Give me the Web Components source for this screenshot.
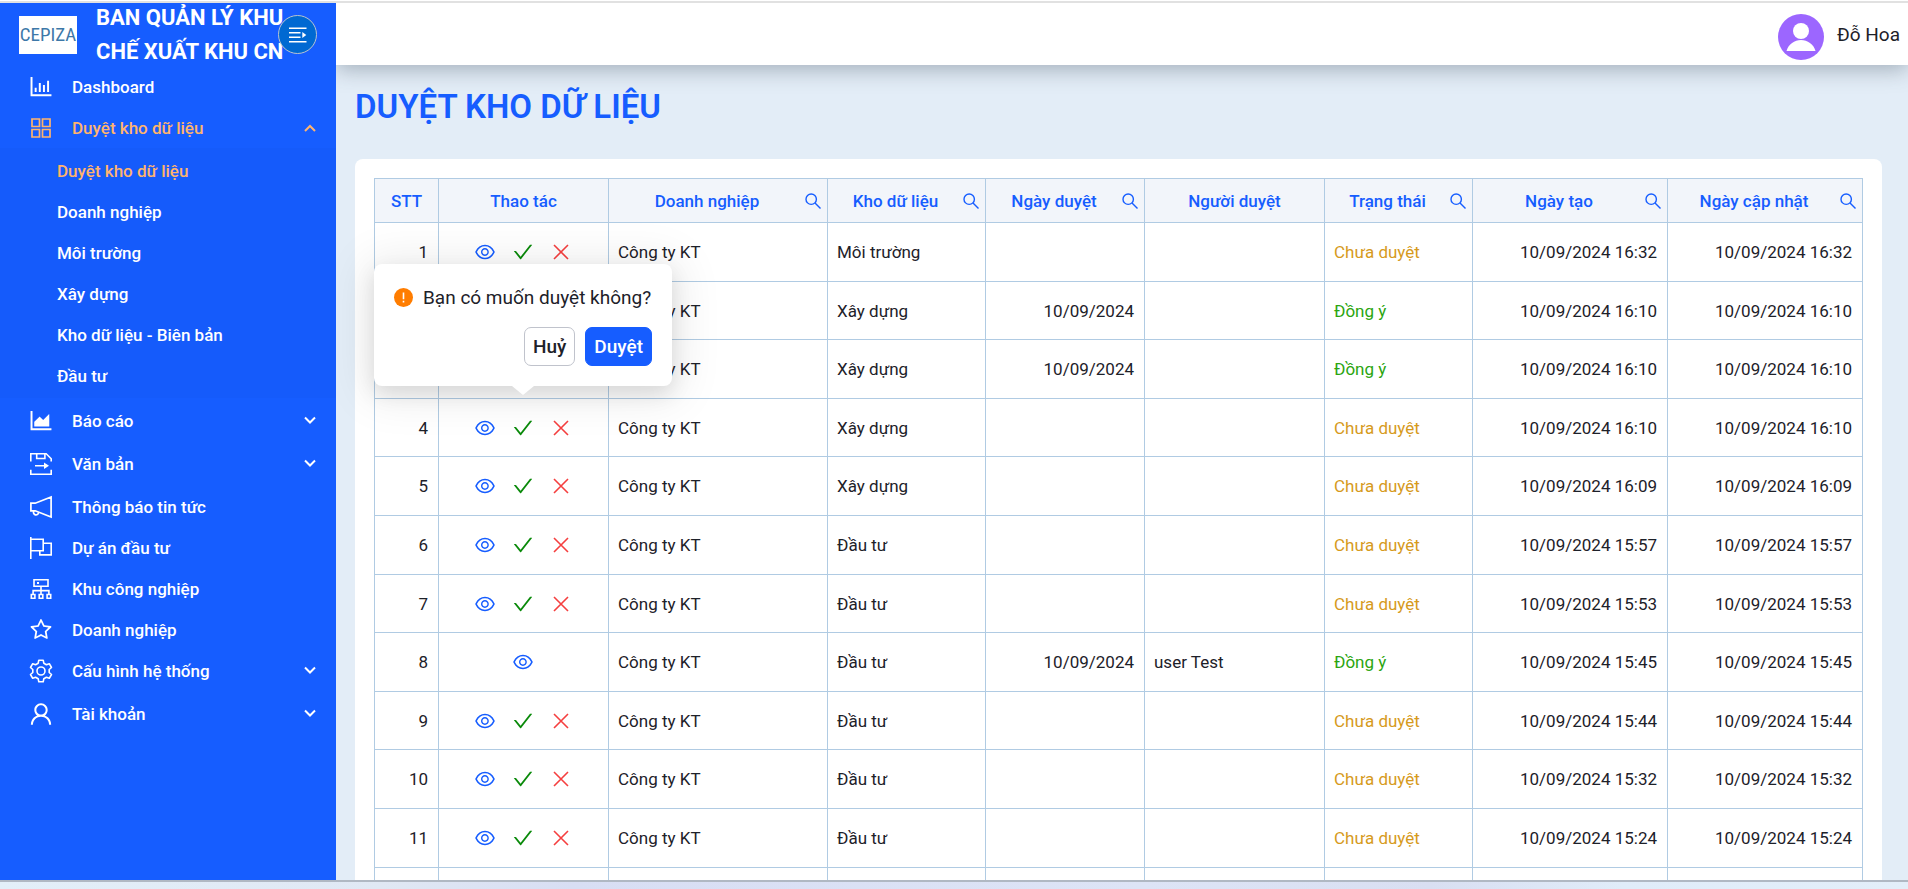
<!DOCTYPE html>
<html lang="vi">
  <head>
    <meta charset="utf-8" />
    <title>Duyệt kho dữ liệu</title>
    <meta name="viewport" content="width=device-width, initial-scale=1" />

    <style>
      body {
        --blue: #165dff;
        --orange: #ffb46e;
        --line: #b0cbe3;
        --page: #e3edf7;
        --text: #1d2129;
        margin: 0;
        height: 100vh;
        overflow: hidden;
        font-family: Roboto, 'Noto Sans', sans-serif;
        font-size: 17px;
        color: var(--text);
      }
    </style>

    <template id="app-shell">
      <style>
        :host {
          display: flex;
          flex-direction: column;
          height: 100%;
          box-sizing: border-box;
          border-top: 1px solid #fff;
        }
        .body {
          flex: 1;
          min-height: 0;
          display: flex;
          border-top: 2px solid #e1e1e1;
          border-bottom: 2px solid #b0b8c3;
        }
        .right {
          flex: 1;
          min-width: 0;
          display: flex;
          flex-direction: column;
          background: var(--page);
        }
        main {
          flex: 1;
          min-height: 0;
          overflow: hidden;
          padding: 20px 26px 0 19px;
        }
        .strip {
          height: 7px;
          background: linear-gradient(90deg, #e3eff9, #e0e8f4 20%, #d8def4 30%, #dde4f6 60%, #d9dff2 75%, #e0ecf9 85%, #e3eef9);
        }
      </style>
      <div class="body">
        <slot name="side"></slot>
        <div class="right">
          <slot name="top"></slot>
          <main><slot></slot></main>
        </div>
      </div>
      <div class="strip"></div>
    </template>

    <template id="side-bar">
      <style>
        :host {
          display: block;
          width: 336px;
          flex: none;
          background: var(--blue);
          color: #fff;
          overflow: hidden;
        }
        header {
          display: flex;
          align-items: center;
          height: 63px;
          padding: 0 19px;
        }
        .logo {
          flex: none;
          width: 58px;
          height: 38px;
          margin-right: 19px;
          background: #fff;
          color: #3d78a8;
          font: 19px/38px 'Liberation Sans Narrow', 'Roboto Condensed', Roboto, sans-serif;
          text-align: center;
        }
        h2 {
          flex: 1;
          min-width: 0;
          margin: 0;
          font-size: 22px;
          line-height: 34px;
          font-weight: 700;
          white-space: nowrap;
        }
        button {
          flex: none;
          display: grid;
          place-items: center;
          width: 39px;
          height: 39px;
          padding: 0;
          border: 1px solid #b9c4cf;
          border-radius: 50%;
          background: #0069d2;
          color: #fff;
          z-index: 1;
        }
      </style>
      <header>
        <div class="logo">CEPIZA</div>
        <h2><slot name="title"></slot></h2>
        <button aria-label="Thu gọn"><app-icon name="fold" size="18"></app-icon></button>
      </header>
      <nav><slot></slot></nav>
    </template>

    <template id="menu-item">
      <style>
        :host {
          display: block;
          font-weight: 500;
        }
        a {
          display: flex;
          align-items: center;
          height: 41px;
          padding-left: 30px;
          color: inherit;
          text-decoration: none;
        }
        app-icon {
          margin-right: 20px;
        }
        :host([sub]) a {
          padding-left: 57px;
        }
        :host([sub]) app-icon {
          display: none;
        }
        :host([active]) {
          color: var(--orange);
        }
      </style>
      <a href="#"><app-icon size="22"></app-icon><slot></slot></a>
    </template>

    <template id="menu-group">
      <style>
        :host {
          display: block;
          margin-bottom: 2px;
        }
        button {
          display: flex;
          align-items: center;
          width: 100%;
          height: 41px;
          padding: 0 20px 0 30px;
          border: 0;
          background: none;
          color: #fff;
          font: inherit;
          font-weight: 500;
          cursor: pointer;
        }
        span {
          flex: 1;
          margin-left: 20px;
          text-align: left;
        }
        .items {
          display: none;
          padding: 2px 0;
          background: #155bfb;
        }
        :host([open]) button {
          color: var(--orange);
        }
        :host([open]) .items {
          display: block;
        }
      </style>
      <button><app-icon class="icon" size="22"></app-icon><span></span><app-icon class="arrow" size="12"></app-icon></button>
      <div class="items"><slot></slot></div>
    </template>

    <template id="top-bar">
      <style>
        :host {
          display: flex;
          flex: none;
          align-items: center;
          justify-content: flex-end;
          gap: 13px;
          height: 62px;
          padding-right: 8px;
          background: #fff;
          box-shadow: 0 4px 22px rgba(60, 75, 90, 0.4);
          clip-path: inset(0 0 -40px 0);
          font-size: 19px;
        }
        svg {
          width: 46px;
          height: 46px;
          margin-top: 6px;
        }
      </style>
      <svg viewBox="0 0 46 46">
        <circle cx="23" cy="23" r="23" fill="#9c66ff" />
        <circle cx="23" cy="17" r="8" fill="#fff" />
        <path d="M8.500 37c2-7 8-11 14.500-11s12.500 4 14.500 11z" fill="#fff" />
      </svg>
      <slot></slot>
    </template>

    <template id="page-card">
      <style>
        :host {
          display: block;
        }
        h1 {
          margin: 0 0 30px;
          font-size: 33px;
          line-height: 44px;
          font-weight: 600;
          color: var(--blue);
        }
        .card {
          padding: 19px;
          border-radius: 8px;
          background: #fff;
        }
      </style>
      <h1><slot name="title"></slot></h1>
      <div class="card"><slot></slot></div>
    </template>

    <template id="data-table">
      <style>
        :host {
          display: block;
        }
        table {
          width: 100%;
          table-layout: fixed;
          border-collapse: collapse;
        }
        th,
        td {
          border: 1px solid var(--line);
          padding: 0 10px 0 9px;
          white-space: nowrap;
        }
        th {
          height: 43px;
          padding: 0;
          background: #f2f5fa;
          color: var(--blue);
          font-weight: 500;
        }
        th div {
          display: flex;
          align-items: center;
        }
        th span {
          flex: 1;
        }
        th button {
          margin-right: 6px;
        }
        td {
          height: 58px;
        }
        tr:nth-child(5n + 2) td,
        tr:nth-child(5n + 4) td {
          height: 57px;
        }
        .num {
          text-align: right;
        }
        .actions {
          display: flex;
          justify-content: center;
          gap: 18px;
        }
        .anchor {
          position: relative;
          display: block;
        }
        button {
          display: block;
          padding: 0;
          border: 0;
          background: none;
          color: var(--blue);
          cursor: pointer;
        }
        .ok {
          color: #0a8a0a;
        }
        .no {
          color: #f53f3f;
        }
        .wait {
          color: #d69a1c;
        }
        .done {
          color: #2ba50f;
        }
      </style>
      <table>
        <colgroup></colgroup>
        <thead><tr></tr></thead>
        <tbody></tbody>
      </table>
    </template>

    <template id="confirm-pop">
      <style>
        :host {
          position: absolute;
          bottom: calc(100% + 32px);
          left: 50%;
          z-index: 2;
          transform: translateX(-50%);
          width: 258px;
          padding: 20px;
          border-radius: 8px;
          background: #fff;
          box-shadow: 0 8px 20px rgba(0, 0, 0, 0.1), 0 4px 44px 10px rgba(0, 0, 0, 0.08);
          font-size: 19px;
          white-space: nowrap;
        }
        :host::after {
          content: '';
          position: absolute;
          top: 100%;
          left: 50%;
          margin-left: -11px;
          border: 11px solid transparent;
          border-top: 9px solid #fff;
          border-bottom: 0;
        }
        p {
          display: flex;
          align-items: center;
          gap: 10px;
          margin: 0 0 15px;
          line-height: 28px;
        }
        p app-icon {
          color: #ff7d00;
        }
        div {
          display: flex;
          justify-content: flex-end;
          gap: 10px;
        }
        button {
          height: 39px;
          padding: 0 8px;
          border: 1px solid #c0c3cc;
          border-radius: 7px;
          background: #fff;
          color: inherit;
          font: inherit;
          font-weight: 500;
        }
        .primary {
          border-color: var(--blue);
          background: var(--blue);
          color: #fff;
        }
      </style>
      <p><app-icon name="warn" size="19"></app-icon><slot></slot></p>
      <div><button>Huỷ</button><button class="primary">Duyệt</button></div>
    </template>
  </head>

  <body>
    <app-shell>
      <side-bar slot="side">
        <span slot="title">BAN QUẢN LÝ KHU<br />CHẾ XUẤT KHU CN</span>
        <menu-item icon="bars">Dashboard</menu-item>
        <menu-group icon="apps" label="Duyệt kho dữ liệu" open>
          <menu-item sub active>Duyệt kho dữ liệu</menu-item>
          <menu-item sub>Doanh nghiệp</menu-item>
          <menu-item sub>Môi trường</menu-item>
          <menu-item sub>Xây dựng</menu-item>
          <menu-item sub>Kho dữ liệu - Biên bản</menu-item>
          <menu-item sub>Đầu tư</menu-item>
        </menu-group>
        <menu-group icon="area" label="Báo cáo"></menu-group>
        <menu-group icon="save" label="Văn bản"></menu-group>
        <menu-item icon="horn">Thông báo tin tức</menu-item>
        <menu-item icon="flag">Dự án đầu tư</menu-item>
        <menu-item icon="cluster">Khu công nghiệp</menu-item>
        <menu-item icon="star">Doanh nghiệp</menu-item>
        <menu-group icon="gear" label="Cấu hình hệ thống"></menu-group>
        <menu-group icon="user" label="Tài khoản"></menu-group>
      </side-bar>
      <top-bar slot="top">Đỗ Hoa</top-bar>
      <page-card>
        <span slot="title">DUYỆT KHO DỮ LIỆU</span>
        <data-table></data-table>
      </page-card>
    </app-shell>

    <script>
      // [viewBox, markup]
      const ANT = '64 64 896 896';
      const AXES =
        'M888 792H200V168c0-4.400-3.600-8-8-8h-56c-4.400 0-8 3.600-8 8v688c0 4.400 3.600 8 8 8h752c4.400 0 8-3.600 8-8v-56c0-4.400-3.600-8-8-8z';
      const line = (w, body) => `<g fill="none" stroke="currentColor" stroke-width="${w}">${body}</g>`;
      const ICONS = {
        bars: ['108 120 808 808', `<path d="${AXES}M280 552h72v160h-72zM432 376h72v336h-72zM584 454h72v258h-72zM736 296h72v416h-72z"/>`],
        area: [
          '108 120 808 808',
          `<path d="${AXES}M272 728h536c4.400 0 8-3.600 8-8V284c0-7.200-8.700-10.700-13.700-5.700L592 488.600l-125.400-124a8 8 0 00-11.300 0l-189 189.600a7.900 7.900 0 00-2.300 5.600V720c0 4.400 3.600 8 8 8z"/>`,
        ],
        apps: ['0 0 22 22', line(1.7, '<path d="M2 2h7.500v7.500H2zM12.500 2H20v7.500h-7.500zM2 12.500h7.500V20H2zM12.500 12.500H20V20h-7.500z"/>')],
        save: [
          '0 0 22 22',
          line(1.6, '<path d="M.8 8.500V.8h15.400l5 5v2.700M6.700.8v4.700h8.200V.8M.8 16.800v4.400h20.400v-4.400M5 12.700h10"/>') +
            '<path d="M14 9.500l5 3.200-5 3.200z"/>',
        ],
        horn: [
          '0 0 22 22',
          line(1.7, '<path d="M.9 7.200h4.300L21.100.9v20.200L5.200 14.800H.9zM3.800 15.200a2.500 2.500 0 104.700 1.200"/>'),
        ],
        flag: ['0 0 22 22', line(1.6, '<path d="M.8 0v22M.8 2.300h12.400v11.400H.8M13.200 6.300h8v11.600H9.800v-4.200"/>')],
        cluster: [
          '0 0 22 22',
          line(1.6, '<path d="M4 1.800h14v6.400H4zM11 8.200V16M3.100 16v-3.400h15.800V16M1.300 16.500h3.600v3.700H1.300zM9.200 16.500h3.600v3.700H9.200zM17.100 16.500h3.600v3.700h-3.600z"/>') +
            '<path d="M7 4h2v2H7z"/>',
        ],
        star: [
          ANT,
          '<path d="M908.100 353.100l-253.900-36.900L540.700 86.100c-3.100-6.300-8.200-11.400-14.500-14.500-15.800-7.800-35-1.300-42.900 14.500L369.800 316.200l-253.900 36.900c-7 1-13.400 4.300-18.300 9.300a32 32 0 00.6 45.300l183.700 179.100-43.400 252.900a32 32 0 0046.400 33.700L512 754l227.100 119.400c6.200 3.300 13.400 4.400 20.300 3.200 17.400-3 29.100-19.500 26.100-36.900l-43.400-252.900 183.700-179.100c5-4.900 8.300-11.300 9.300-18.300 2.700-17.500-9.500-33.700-27-36.300zM664.800 561.600l36.100 210.300L512 672.700 323.100 772l36.100-210.300-152.800-149L417.600 382 512 190.700 606.400 382l211.200 30.700-152.800 148.900z"/>',
        ],
        gear: [
          '0 0 22 22',
          line(
            1.6,
            '<path stroke-linejoin="round" d="M8.800.2h4.400l.6 3 2.600 1.500 2.900-1 2.200 3.800-2.300 2v3l2.300 2-2.200 3.800-2.900-1-2.600 1.500-.6 3H8.800l-.6-3-2.600-1.500-2.900 1L.5 14.500l2.300-2v-3l-2.300-2 2.200-3.800 2.900 1 2.600-1.500z"/><circle cx="11" cy="11" r="4"/>'
          ),
        ],
        user: [
          '104 104 816 816',
          '<path d="M858.500 763.600a374 374 0 00-80.600-119.500 375.600 375.600 0 00-119.500-80.600c-.4-.2-.8-.3-1.200-.5C719.500 518 760 444.700 760 362c0-137-111-248-248-248S264 225 264 362c0 82.700 40.500 156 102.800 201.100-.4.2-.8.3-1.200.5-44.800 18.900-85 46-119.500 80.600a375.600 375.600 0 00-80.600 119.500A371.700 371.700 0 00136 901.800a8 8 0 008 8.200h60c4.400 0 7.900-3.500 8-7.800 2-77.200 33-149.500 87.800-204.300 56.700-56.700 132-87.900 212.200-87.900s155.500 31.200 212.200 87.900C779 752.700 810 825 812 902.200c.1 4.400 3.600 7.800 8 7.800h60a8 8 0 008-8.200c-1-47.800-10.900-94.300-29.500-138.200zM512 534c-45.900 0-89.100-17.900-121.600-50.400S340 407.900 340 362c0-45.900 17.900-89.100 50.400-121.600S466.100 190 512 190s89.100 17.900 121.600 50.400S684 316.100 684 362c0 45.900-17.900 89.100-50.400 121.600S557.900 534 512 534z"/>',
        ],
        eye: [
          ANT,
          '<path d="M942.200 486.200C847.400 286.500 704.100 186 512 186c-192.200 0-335.400 100.500-430.200 300.300a60.300 60.300 0 000 51.500C176.600 737.500 319.900 838 512 838c192.200 0 335.400-100.500 430.200-300.300 7.700-16.200 7.700-35 0-51.500zM512 766c-161.300 0-279.400-81.800-362.700-254C232.600 339.800 350.700 258 512 258c161.300 0 279.400 81.800 362.700 254C791.500 684.200 673.400 766 512 766zm-4-430c-97.200 0-176 78.800-176 176s78.800 176 176 176 176-78.800 176-176-78.800-176-176-176zm0 288c-61.900 0-112-50.100-112-112s50.100-112 112-112 112 50.100 112 112-50.100 112-112 112z"/>',
        ],
        check: [
          ANT,
          '<path d="M912 190h-69.900c-9.800 0-19.100 4.500-25.100 12.200L404.700 724.500 207 474a32 32 0 00-25.100-12.200H112c-6.700 0-10.400 7.700-6.300 12.900l273.900 347c12.800 16.200 37.400 16.200 50.300 0l488.400-618.900c4.100-5.100.4-12.800-6.300-12.800z"/>',
        ],
        close: ['0 0 20 20', line(1.6, '<path d="M3 3l14 14M17 3L3 17"/>')],
        search: ['0 0 16 16', line(1.4, '<circle cx="6.200" cy="6.200" r="5.200"/><path d="M10 10l5.500 5.500"/>')],
        fold: ['0 0 18 18', line(1.6, '<path d="M0 2.300h17.500M0 6.800h11.500M0 11.300h11.500M0 15.800h17.500"/>') + '<path d="M13.300 6l4 3-4 3z"/>'],
        down: ['0 0 12 12', line(2, '<path d="M1 2.500l5 5 5-5"/>')],
        up: ['0 0 12 12', line(2, '<path d="M1 9l5-5 5 5"/>')],
        warn: ['0 0 19 19', '<circle cx="9.500" cy="9.500" r="9.500"/><path d="M8.700 4.500h1.600v6.800H8.700zM8.700 12.700h1.600v1.700H8.700z" fill="#fff"/>'],
      };

      const stamp = (el, id) => {
        const root = el.attachShadow({ mode: 'open' });
        root.append(document.getElementById(id).content.cloneNode(true));
        return root;
      };

      customElements.define(
        'app-icon',
        class extends HTMLElement {
          static get observedAttributes() {
            return ['name'];
          }
          constructor() {
            super();
            this.attachShadow({ mode: 'open' });
          }
          attributeChangedCallback() {
            this.render();
          }
          connectedCallback() {
            this.render();
          }
          render() {
            const icon = ICONS[this.getAttribute('name')];
            if (!icon) return;
            const size = this.getAttribute('size') || 20;
            this.shadowRoot.innerHTML = `
              <style>:host { display: block; flex: none; } svg { display: block; overflow: visible; }</style>
              <svg width="${size}" height="${size}" viewBox="${icon[0]}" fill="currentColor" aria-hidden="true">${icon[1]}</svg>`;
          }
        }
      );

      ['app-shell', 'side-bar', 'top-bar', 'page-card', 'confirm-pop'].forEach((name) => {
        customElements.define(
          name,
          class extends HTMLElement {
            constructor() {
              super();
              stamp(this, name);
            }
          }
        );
      });

      customElements.define(
        'menu-item',
        class extends HTMLElement {
          constructor() {
            super();
            const root = stamp(this, 'menu-item');
            root.querySelector('app-icon').setAttribute('name', this.getAttribute('icon') || '');
          }
        }
      );

      customElements.define(
        'menu-group',
        class extends HTMLElement {
          constructor() {
            super();
            const root = stamp(this, 'menu-group');
            root.querySelector('.icon').setAttribute('name', this.getAttribute('icon'));
            root.querySelector('span').textContent = this.getAttribute('label');
            this.arrow = root.querySelector('.arrow');
            this.update();
            root.querySelector('button').addEventListener('click', () => {
              this.toggleAttribute('open');
              this.update();
            });
          }
          update() {
            this.arrow.setAttribute('name', this.hasAttribute('open') ? 'up' : 'down');
          }
        }
      );

      // title, width, has a search button
      const COLUMNS = [
        ['STT', 64],
        ['Thao tác', 170],
        ['Doanh nghiệp', 219, true],
        ['Kho dữ liệu', 158, true],
        ['Ngày duyệt', 159, true],
        ['Người duyệt', 180],
        ['Trạng thái', 148, true],
        ['Ngày tạo', 195, true],
        ['Ngày cập nhật', 195, true],
      ];

      // store, time, approved on, approved by
      const ROWS = [
        ['Môi trường', '16:32'],
        ['Xây dựng', '16:10', '10/09/2024'],
        ['Xây dựng', '16:10', '10/09/2024'],
        ['Xây dựng', '16:10'],
        ['Xây dựng', '16:09'],
        ['Đầu tư', '15:57'],
        ['Đầu tư', '15:53'],
        ['Đầu tư', '15:45', '10/09/2024', 'user Test'],
        ['Đầu tư', '15:44'],
        ['Đầu tư', '15:32'],
        ['Đầu tư', '15:24'],
      ];
      const ASKING = 4;

      customElements.define(
        'data-table',
        class extends HTMLElement {
          constructor() {
            super();
            const root = stamp(this, 'data-table');
            const total = COLUMNS.reduce((sum, c) => sum + c[1], 0);
            root.querySelector('colgroup').innerHTML = COLUMNS.map((c) => `<col style="width: calc(100% * ${c[1]} / ${total})">`).join('');
            root.querySelector('thead tr').innerHTML = COLUMNS.map(
              ([title, , search]) =>
                `<th><div><span>${title}</span>${
                  search ? `<button aria-label="Tìm ${title}"><app-icon name="search" size="16"></app-icon></button>` : ''
                }</div></th>`
            ).join('');
            root.querySelector('tbody').innerHTML =
              ROWS.map((row, i) => this.row(row, i + 1)).join('') + `<tr>${'<td></td>'.repeat(COLUMNS.length)}</tr>`;
          }

          row([store, time, date = '', user = ''], n) {
            const pop = n === ASKING ? '<confirm-pop>Bạn có muốn duyệt không?</confirm-pop>' : '';
            const decide = date
              ? ''
              : `<span class="anchor"><button class="ok" aria-label="Duyệt"><app-icon name="check"></app-icon></button>${pop}</span>
                 <button class="no" aria-label="Từ chối"><app-icon name="close"></app-icon></button>`;
            return `<tr>
              <td class="num">${n}</td>
              <td><div class="actions"><button aria-label="Xem"><app-icon name="eye"></app-icon></button>${decide}</div></td>
              <td>Công ty KT</td>
              <td>${store}</td>
              <td class="num">${date}</td>
              <td>${user}</td>
              <td class="${date ? 'done' : 'wait'}">${date ? 'Đồng ý' : 'Chưa duyệt'}</td>
              <td class="num">10/09/2024 ${time}</td>
              <td class="num">10/09/2024 ${time}</td>
            </tr>`;
          }
        }
      );
    </script>
  </body>
</html>
